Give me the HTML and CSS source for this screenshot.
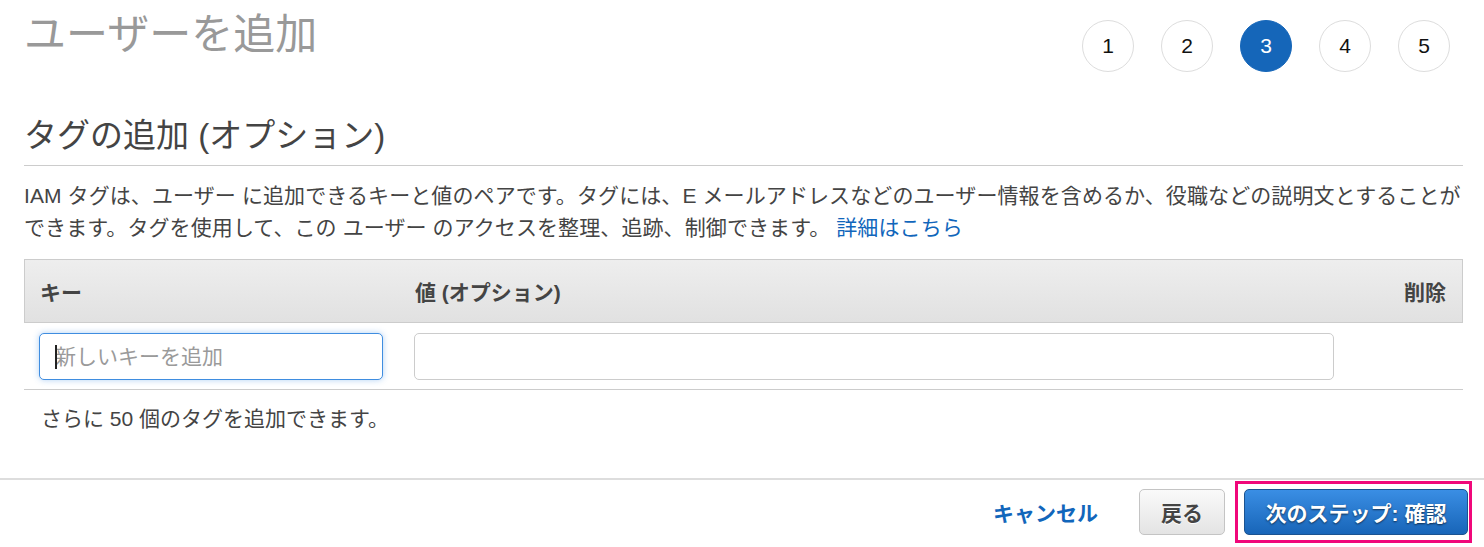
FILE: index.html
```html
<!DOCTYPE html>
<html lang="ja">
<head>
<meta charset="utf-8">
<title>ユーザーを追加</title>
<link rel="stylesheet" href="styles.css">
</head>
<body>
<div class="page">
  <header class="top">
    <h1 class="title">ユーザーを追加</h1>
    <ol class="steps">
      <li class="step">1</li>
      <li class="step">2</li>
      <li class="step step-active">3</li>
      <li class="step">4</li>
      <li class="step">5</li>
    </ol>
  </header>

  <h2 class="section-title">タグの追加 (オプション)</h2>
  <p class="desc">IAM タグは、ユーザー に追加できるキーと値のペアです。タグには、E メールアドレスなどのユーザー情報を含めるか、役職などの説明文とすることができます。タグを使用して、この ユーザー のアクセスを整理、追跡、制御できます。 <a class="link" href="#">詳細はこちら</a></p>

  <div class="tag-table">
    <div class="thead">
      <div class="th">キー</div>
      <div class="th">値 (オプション)</div>
      <div class="th th-right">削除</div>
    </div>
    <div class="trow">
      <div class="td td-key">
        <div class="field field-focus">
          <span class="caret"></span>
          <input class="input" type="text" placeholder="新しいキーを追加">
        </div>
      </div>
      <div class="td td-value">
        <div class="field">
          <input class="input" type="text">
        </div>
      </div>
      <div class="td"></div>
    </div>
  </div>

  <p class="remaining">さらに 50 個のタグを追加できます。</p>
</div>

<footer class="footer">
  <a class="cancel" href="#">キャンセル</a>
  <button class="btn btn-back" type="button">戻る</button>
  <span class="highlight">
    <button class="btn btn-primary" type="button">次のステップ: 確認</button>
  </span>
</footer>
</body>
</html>
```

FILE: styles.css
```css
* { box-sizing: border-box; }

html, body {
  margin: 0;
  padding: 0;
  background: #ffffff;
}

body {
  font-family: "Liberation Sans", "Noto Sans CJK JP", sans-serif;
  font-size: 21px;
  color: #444444;
}

.page {
  padding: 0 21px 0 24px;
}

.top {
  display: flex;
  justify-content: space-between;
  align-items: flex-start;
  height: 116px;
}

.title {
  margin: 9px 0 0 0;
  font-size: 42px;
  line-height: 52px;
  font-weight: normal;
  color: #999999;
}

.steps {
  display: flex;
  gap: 27px;
  list-style: none;
  margin: 20px 13px 0 0;
  padding: 0;
}

.step {
  width: 52px;
  height: 52px;
  border: 1px solid #dddddd;
  border-radius: 50%;
  display: flex;
  align-items: center;
  justify-content: center;
  font-family: "Liberation Sans", sans-serif;
  font-size: 21px;
  color: #111111;
  background: #ffffff;
}

.step-active {
  background: #1566b9;
  border-color: #1566b9;
  color: #ffffff;
}

.section-title {
  margin: 0;
  padding-bottom: 9px;
  font-size: 33px;
  line-height: 40px;
  font-weight: normal;
  color: #444444;
  border-bottom: 1px solid #cccccc;
}

.desc {
  margin: 14px 0 0 0;
  line-height: 32px;
  letter-spacing: 0.1px;
}

.link {
  color: #1166bb;
  text-decoration: none;
}

.tag-table {
  margin-top: 15px;
}

.thead,
.trow {
  display: grid;
  grid-template-columns: 375px 1fr 129px;
}

.thead {
  height: 64px;
  border: 1px solid #cccccc;
  background: linear-gradient(#eeeeee, #e1e1e1);
  align-items: center;
}

.th {
  font-weight: bold;
  padding-left: 15px;
  color: #444444;
}

.th-right {
  text-align: right;
  padding: 0 16px 0 0;
}

.trow {
  border-bottom: 1px solid #cccccc;
  padding: 10px 0 9px 0;
}

.td-key {
  padding: 0 16px 0 15px;
}

.td-value {
  padding-left: 15px;
}

.field {
  position: relative;
  height: 47px;
  border: 1px solid #cccccc;
  border-radius: 5px;
  background: #ffffff;
}

.field-focus {
  border-color: #3f8de0;
  box-shadow: 0 0 6px rgba(80, 150, 230, 0.45);
}

.input {
  width: 100%;
  height: 100%;
  border: 0;
  outline: none;
  background: transparent;
  padding: 0 15px;
  font-family: "Liberation Sans", "Noto Sans CJK JP", sans-serif;
  font-size: 21px;
  color: #444444;
}

.input::placeholder {
  color: #9a9a9a;
}

.caret {
  position: absolute;
  left: 15px;
  top: 11px;
  width: 2px;
  height: 24px;
  background: #222222;
}

.remaining {
  margin: 13px 0 0 0;
  padding-left: 17px;
  line-height: 32px;
}

.footer {
  margin-top: 43px;
  border-top: 2px solid #dddddd;
  display: flex;
  justify-content: flex-end;
  align-items: center;
  padding: 1px 12px 0 0;
}

.cancel {
  color: #1166bb;
  font-weight: bold;
  text-decoration: none;
  margin-right: 41px;
}

.btn {
  height: 46px;
  border-radius: 5px;
  font-family: "Liberation Sans", "Noto Sans CJK JP", sans-serif;
  font-size: 21px;
  font-weight: bold;
  padding: 0 18px;
  cursor: pointer;
}

.btn-back {
  width: 86px;
  color: #444444;
  background: linear-gradient(#fafafa, #e4e4e4);
  border: 1px solid #c4c4c4;
  text-shadow: 0 1px 0 #ffffff;
  margin-right: 10px;
}

.highlight {
  display: inline-flex;
  border: 3px solid #f0077a;
  padding: 5px 1px 5px 6px;
}

.btn-primary {
  width: 224px;
  color: #ffffff;
  background: linear-gradient(#3a8ee4, #1865b8);
  border: 1px solid #1b5390;
  text-shadow: 0 1px 2px rgba(0, 0, 0, 0.6);
}
```
